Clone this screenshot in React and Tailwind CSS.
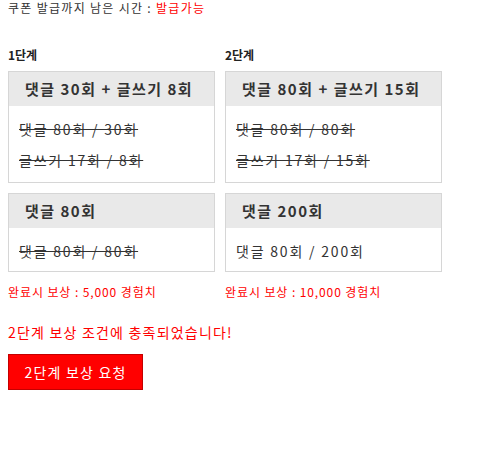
import React from "react";

const font = { fontFamily: '"Noto Sans CJK KR", "Noto Sans", sans-serif' };

const Box = ({ title, rows, bodyPb = "pb-[6px]" }) => (
  <div className="border border-[#d6d6d6] bg-white">
    <div className="h-[34px] flex items-center bg-[#e9e9e9] px-[16px] text-[15px] font-bold tracking-[1.5px] whitespace-nowrap text-[#333]">
      {title}
    </div>
    <div className={`px-[10px] pt-[8px] ${bodyPb} text-[14px] tracking-[1.8px] text-[#333]`}>
      {rows.map((r, i) => (
        <div key={i} className={`h-[31px] flex items-center whitespace-nowrap ${r.done ? "line-through" : ""}`}>
          {r.text}
        </div>
      ))}
    </div>
  </div>
);

const Column = ({ label, width, top, bottom, reward }) => (
  <div className={`${width} flex flex-col`}>
    <div className="h-[18px] flex items-center text-[12px] font-bold text-[#222]">{label}</div>
    <div className="mt-[7px]">{top}</div>
    <div className="mt-[10px]">{bottom}</div>
    <div className="mt-[11px] text-[12px] tracking-[0.9px] text-[#ff0000]">{reward}</div>
  </div>
);

export default function App() {
  return (
    <div className="w-[494px] h-[464px] bg-white px-[8px] text-[#333]" style={font}>
      <div className="h-[16px] flex items-center text-[12px] tracking-[1.3px] text-[#333]">
        쿠폰 발급까지 남은 시간 : <span className="ml-[4px] text-[#ff0000]">발급가능</span>
      </div>

      <div className="mt-[30px] flex gap-[10px]">
        <Column
          label="1단계"
          width="w-[207px]"
          top={
            <Box
              title="댓글 30회 + 글쓰기 8회"
              rows={[
                { text: "댓글 80회 / 30회", done: true },
                { text: "글쓰기 17회 / 8회", done: true },
              ]}
            />
          }
          bottom={
            <Box
              title="댓글 80회"
              bodyPb="pb-[4px]"
              rows={[{ text: "댓글 80회 / 80회", done: true }]}
            />
          }
          reward="완료시 보상 : 5,000 경험치"
        />
        <Column
          label="2단계"
          width="w-[217px]"
          top={
            <Box
              title="댓글 80회 + 글쓰기 15회"
              rows={[
                { text: "댓글 80회 / 80회", done: true },
                { text: "글쓰기 17회 / 15회", done: true },
              ]}
            />
          }
          bottom={
            <Box
              title="댓글 200회"
              bodyPb="pb-[4px]"
              rows={[{ text: "댓글 80회 / 200회", done: false }]}
            />
          }
          reward="완료시 보상 : 10,000 경험치"
        />
      </div>

      <div className="mt-[21px] text-[14px] tracking-[1.2px] text-[#ff0000]">2단계 보상 조건에 충족되었습니다!</div>

      <button className="mt-[11px] w-[135px] h-[36px] bg-[#ff0000] border border-[#c40000] text-white text-[14px] tracking-[1.2px] flex items-center justify-center">
        2단계 보상 요청
      </button>
    </div>
  );
}
